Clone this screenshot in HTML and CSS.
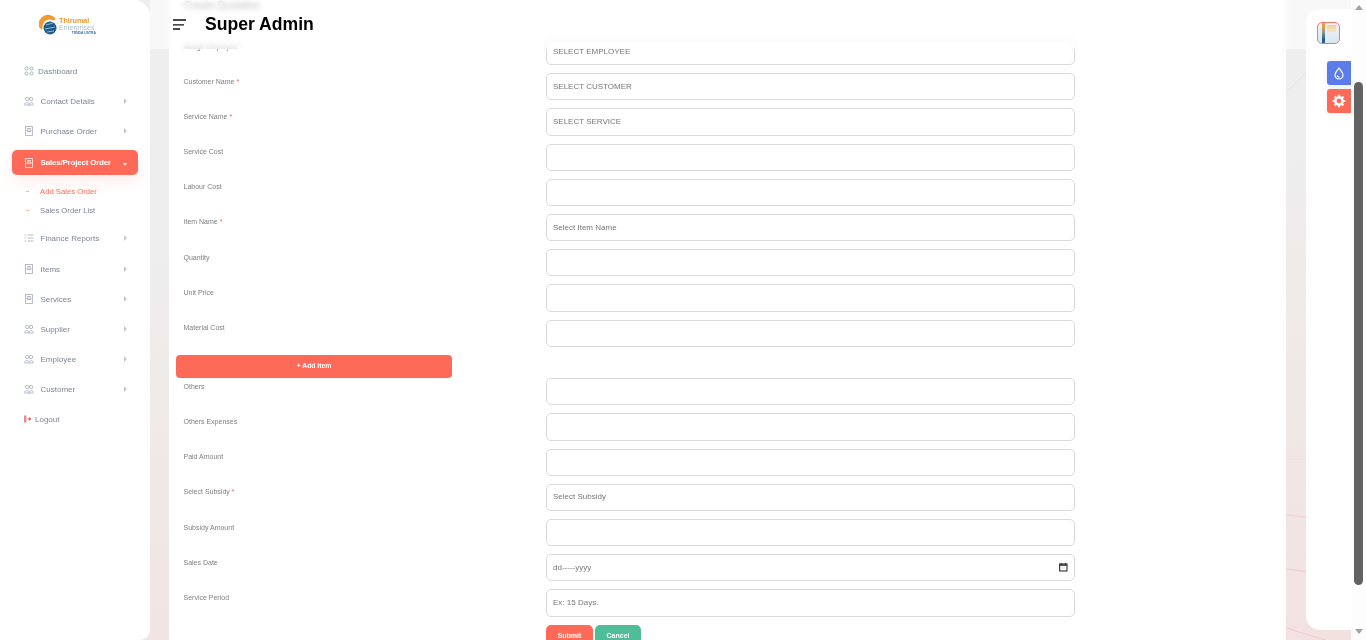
FILE: index.html
```html
<!DOCTYPE html>
<html lang="en">
<head>
    <meta charset="UTF-8">
    <meta name="viewport" content="width=device-width, initial-scale=1.0">
    <title>Create Quotation</title>
    <link rel="stylesheet" href="styles.css">
</head>
<body>
<div class="page">
    <svg class="bg-lines" width="1366" height="640" viewBox="0 0 1366 640">
        <path d="M1286 92 L1306 73" stroke="#dcebe8" fill="none"/>
        <path d="M1286 459 L1306 459" stroke="#f5dcdc" fill="none"/>
        <path d="M1286 515 L1306 517" stroke="#f5cfcf" fill="none"/>
        <path d="M1286 569 L1306 571.5" stroke="#f5c9c9" fill="none"/>
        <path d="M1286 628 L1325 640" stroke="#f5c9c9" fill="none"/>
    </svg>

    <aside class="sidebar">
        <div class="logo">
            <svg width="20" height="23" viewBox="0 0 20 23">
                <path d="M0 13 A9.5 9.5 0 0 1 17 5 L14 6.5 A7 7 0 0 0 4 10 L3 16 Z" fill="#f39a2b"/>
                <circle cx="11" cy="14" r="6.5" fill="#1f5c8c"/>
                <path d="M7 11 L14 9 M6 15 L16 13 M8 18 L15 17" stroke="#8fb8d4" stroke-width="1"/>
            </svg>
            <div class="logo-text">
                <span class="logo-name">Thirumal</span>
                <span class="logo-sub">Enterprises</span>
                <span class="logo-tag">TENDA USTRA</span>
            </div>
        </div>
        <nav class="menu">
            <a class="menu-item first short">
                <svg class="ico" viewBox="0 0 10 10"><rect x="1" y="1" width="3" height="3" rx="1"/><rect x="6" y="1" width="3" height="3" rx="1"/><rect x="1" y="6" width="3" height="3" rx="1"/><rect x="6" y="6" width="3" height="3" rx="1"/></svg>
                Dashboard
            </a>
            <a class="menu-item">
                <svg class="ico" viewBox="0 0 10 10"><circle cx="3.2" cy="3" r="1.7"/><circle cx="7" cy="3" r="1.7"/><path d="M.5 8.5 C1 6 5 6 5.2 8.5 M5 8.5 C5.5 6 9 6 9.5 8.5 M.5 9 H9.5"/></svg>
                Contact Details<i class="caret"></i>
            </a>
            <a class="menu-item">
                <svg class="ico" viewBox="0 0 10 10"><rect x="1.5" y=".5" width="7" height="9"/><path d="M3 2.5 H7 M3 4 H7 V5.5 H3 Z"/></svg>
                Purchase Order<i class="caret"></i>
            </a>
            <a class="menu-item active">
                <svg class="ico" viewBox="0 0 10 10"><rect x="1.5" y=".5" width="7" height="9"/><path d="M3 2.5 H7 M3 4 H7 V5.5 H3 Z"/></svg>
                Sales/Project Order<i class="caret down"></i>
            </a>
            <div class="submenu">
                <a class="sub-item current">Add Sales Order</a>
                <a class="sub-item">Sales Order List</a>
            </div>
            <a class="menu-item">
                <svg class="ico" viewBox="0 0 10 10"><path d="M.5 2 H2 M3.5 2 H9.5 M.5 5 H2 M3.5 5 H9.5 M.5 8 H2 M3.5 8 H9.5"/></svg>
                Finance Reports<i class="caret"></i>
            </a>
            <a class="menu-item">
                <svg class="ico" viewBox="0 0 10 10"><rect x="1.5" y=".5" width="7" height="9"/><path d="M3 2.5 H7 M3 4 H7 V5.5 H3 Z"/></svg>
                Items<i class="caret"></i>
            </a>
            <a class="menu-item">
                <svg class="ico" viewBox="0 0 10 10"><rect x="1.5" y=".5" width="7" height="9"/><path d="M3 2.5 H7 M3 4 H7 V5.5 H3 Z"/></svg>
                Services<i class="caret"></i>
            </a>
            <a class="menu-item">
                <svg class="ico" viewBox="0 0 10 10"><circle cx="3.2" cy="3" r="1.7"/><circle cx="7" cy="3" r="1.7"/><path d="M.5 8.5 C1 6 5 6 5.2 8.5 M5 8.5 C5.5 6 9 6 9.5 8.5 M.5 9 H9.5"/></svg>
                Supplier<i class="caret"></i>
            </a>
            <a class="menu-item">
                <svg class="ico" viewBox="0 0 10 10"><circle cx="3.2" cy="3" r="1.7"/><circle cx="7" cy="3" r="1.7"/><path d="M.5 8.5 C1 6 5 6 5.2 8.5 M5 8.5 C5.5 6 9 6 9.5 8.5 M.5 9 H9.5"/></svg>
                Employee<i class="caret"></i>
            </a>
            <a class="menu-item">
                <svg class="ico" viewBox="0 0 10 10"><circle cx="3.2" cy="3" r="1.7"/><circle cx="7" cy="3" r="1.7"/><path d="M.5 8.5 C1 6 5 6 5.2 8.5 M5 8.5 C5.5 6 9 6 9.5 8.5 M.5 9 H9.5"/></svg>
                Customer<i class="caret"></i>
            </a>
            <a class="menu-item short">
                <svg class="ico logout" width="8" height="8" viewBox="0 0 8 8"><rect x="0" y="0.5" width="2.4" height="7" fill="#e58a8a"/><path d="M3.4 4 H6 M5 2.6 L7 4 L5 5.4 Z" stroke="#f0675c" fill="#f0675c" stroke-width=".8"/></svg>
                Logout
            </a>
        </nav>
    </aside>

    <main class="content">
        <h4 class="card-title">Create Quotation</h4>
        <form class="quote-form">
            <label class="lbl">Assign Employee <b>*</b></label><input class="inp" placeholder="SELECT EMPLOYEE">
            <label class="lbl">Customer Name <b>*</b></label><input class="inp" placeholder="SELECT CUSTOMER">
            <label class="lbl">Service Name <b>*</b></label><input class="inp" placeholder="SELECT SERVICE">
            <label class="lbl">Service Cost</label><input class="inp">
            <label class="lbl">Labour Cost</label><input class="inp">
            <label class="lbl">Item Name <b>*</b></label><input class="inp" placeholder="Select Item Name">
            <label class="lbl">Quantity</label><input class="inp">
            <label class="lbl">Unit Price</label><input class="inp">
            <label class="lbl">Material Cost</label><input class="inp">
            <button type="button" class="btn add-item">+ Add Item</button>
            <label class="lbl">Others</label><input class="inp">
            <label class="lbl">Others Expenses</label><input class="inp">
            <label class="lbl">Paid Amount</label><input class="inp">
            <label class="lbl">Select Subsidy <b>*</b></label><input class="inp" placeholder="Select Subsidy">
            <label class="lbl">Subsidy Amount</label><input class="inp">
            <label class="lbl">Sales Date</label>
            <div class="inp date-inp">
                <span>dd-----yyyy</span>
                <svg width="10" height="10" viewBox="0 0 10 10"><rect x="1.6" y="2" width="7.4" height="7" fill="#f4f4f4" stroke="#333" stroke-width="1.1"/><path d="M1.6 3 H9" stroke="#333" stroke-width="1.6"/><path d="M3.2 .8 V2 M7.4 .8 V2" stroke="#333"/></svg>
            </div>
            <label class="lbl">Service Period</label><input class="inp" placeholder="Ex: 15 Days.">
            <div class="actions">
                <button type="button" class="btn submit">Submit</button>
                <button type="button" class="btn cancel">Cancel</button>
            </div>
        </form>
    </main>

    <div class="topbar">
        <svg width="14" height="12" viewBox="0 0 14 12"><path d="M0 1 H13 M0 5.8 H11 M0 10 H7" stroke="#111" stroke-width="1.3"/></svg>
        <h1 class="page-name">Super Admin</h1>
    </div>

    <aside class="rightbar">
        <div class="avatar"></div>
        <a class="side-btn blue">
            <svg width="12" height="13" viewBox="0 0 12 13"><path d="M6 1 C8 4 10 5.5 10 8 A4 4 0 0 1 2 8 C2 5.5 4 4 6 1 Z M4.2 8.5 C4.5 9.6 5.3 10.2 6.5 10.2" fill="none" stroke="#fff" stroke-width="1.2"/></svg>
        </a>
        <a class="side-btn red">
            <svg width="14" height="14" viewBox="0 0 14 14"><circle cx="7" cy="7" r="3.6" fill="none" stroke="#fff" stroke-width="2.4"/><path d="M7 .8 V3 M7 11 V13.2 M.8 7 H3 M11 7 H13.2 M2.6 2.6 L4.2 4.2 M9.8 9.8 L11.4 11.4 M11.4 2.6 L9.8 4.2 M4.2 9.8 L2.6 11.4" stroke="#fff" stroke-width="2.2"/></svg>
        </a>
    </aside>

    <div class="scrollbar">
        <i class="arrow up"></i>
        <div class="thumb"></div>
        <i class="arrow dn"></i>
    </div>
</div>
</body>
</html>
```

FILE: styles.css
```css
* {
    box-sizing: border-box;
}

body {
    margin: 0;
    font-family: "Liberation Sans", Arial, sans-serif;
}

.page {
    position: relative;
    display: flex;
    width: 1366px;
    height: 640px;
    overflow: hidden;
    background: linear-gradient(175deg, #eeeeee 35%, #f3e1e1 100%);
}

.bg-lines {
    position: absolute;
    left: 0;
    top: 0;
}

/* left menu */
.sidebar {
    position: relative;
    z-index: 3;
    flex: 0 0 150px;
    background: #fff;
    border-radius: 0 16px 10px 0;
}

.logo {
    display: flex;
    align-items: flex-start;
    height: 50px;
    padding: 14px 0 0 39px;
    filter: blur(.4px);
}

.logo-text {
    display: flex;
    flex-direction: column;
    width: 37px;
    padding-top: 3px;
    line-height: 7px;
}

.logo-name {
    color: #f0972f;
    font-size: 7.2px;
    font-weight: bold;
}

.logo-sub {
    color: #a9bfd2;
    font-size: 7px;
}

.logo-tag {
    color: #3b6fa8;
    font-size: 3.4px;
    font-weight: bold;
    text-align: right;
    white-space: nowrap;
    line-height: 5px;
}

.menu {
    display: flex;
    flex-direction: column;
    filter: blur(.3px);
}

.menu-item {
    display: flex;
    align-items: center;
    height: 30px;
    padding: 0 23px 0 24px;
    color: #7d8597;
    font-size: 8px;
}

.menu-item.first {
    margin-top: 6px;
}

.menu-item .ico {
    flex: none;
    width: 10px;
    height: 10px;
    margin-right: 6.5px;
    fill: none;
    stroke: #99a0b0;
    stroke-width: .7;
}

.menu-item.short .ico {
    margin-right: 4px;
}

.menu-item .ico.logout {
    width: 8px;
    height: 8px;
    margin-right: 3px;
    stroke: none;
}

.caret {
    margin-left: auto;
    border-left: 3px solid #c5c9d0;
    border-top: 3px solid transparent;
    border-bottom: 3px solid transparent;
}

.menu-item.active {
    height: 25px;
    margin: 4px 12px 0;
    padding: 0 11px 0 12px;
    background: #ff6a58;
    border-radius: 5px;
    color: #fff;
    font-weight: bold;
    letter-spacing: -.2px;
    box-shadow: 0 6px 16px rgba(255, 106, 88, .12);
}

.menu-item.active .ico {
    stroke: #fff;
}

.caret.down {
    border-top: 3px solid #fff;
    border-bottom: 0;
    border-left: 2.5px solid transparent;
    border-right: 2.5px solid transparent;
    margin-top: 3px;
}

.submenu {
    display: flex;
    flex-direction: column;
    padding: 6.5px 0 3.5px;
}

.submenu + .menu-item {
    margin-bottom: 1px;
}

.sub-item {
    position: relative;
    height: 19px;
    line-height: 19px;
    padding-left: 40px;
    color: #7d8597;
    font-size: 7.7px;
}

.sub-item::before {
    content: "";
    position: absolute;
    left: 26px;
    top: 9px;
    width: 3px;
    height: 1px;
    background: #f7b5ad;
}

.sub-item.current {
    color: #ff6a58;
}

/* main card */
.content {
    flex: 0 0 1117px;
    margin-left: 19px;
    background: #fff;
    padding: 0 7px;
}

.card-title {
    margin: 0;
    height: 38px;
    padding: 1px 8px 0;
    color: #666;
    font-size: 10px;
    font-weight: normal;
    line-height: 10px;
}

.quote-form {
    display: grid;
    grid-template-columns: 370px 529px;
    grid-auto-rows: min-content;
    row-gap: 8px;
    filter: blur(.3px);
}

.lbl {
    padding: 3.5px 0 0 7.5px;
    color: #808080;
    font-size: 7px;
    line-height: 9px;
}

.lbl b {
    color: #ff5b5b;
    font-weight: normal;
}

.inp {
    width: 529px;
    height: 27.2px;
    padding: 0 6px 1px;
    background: #fff;
    border: 1px solid #d9d9d9;
    border-radius: 5px;
    color: #777;
    font-family: inherit;
    font-size: 8px;
}

.inp::placeholder {
    color: #777;
    opacity: 1;
}

.date-inp {
    display: flex;
    align-items: center;
    justify-content: space-between;
    padding-right: 6px;
}

.btn {
    border: 0;
    border-radius: 5px;
    color: #fff;
    font-family: inherit;
    font-size: 7px;
    font-weight: bold;
}

.add-item {
    grid-column: 1 / 3;
    width: 276px;
    height: 23px;
    margin-bottom: -7.4px;
    padding: 0 0 2px;
    background: #ff6a58;
    border-radius: 4px;
    font-size: 6.8px;
}

.actions {
    grid-column: 2;
    display: flex;
    gap: 2px;
}

.submit {
    width: 47px;
    height: 22px;
    background: #ff6a58;
}

.cancel {
    width: 46px;
    height: 22px;
    background: #4fbd98;
}

/* header sits over the scrolled form */
.topbar {
    position: absolute;
    left: 150px;
    top: 0;
    right: 15px;
    z-index: 2;
    display: flex;
    align-items: center;
    gap: 18px;
    height: 49px;
    padding-left: 23px;
    background: rgba(255, 255, 255, .6);
    backdrop-filter: blur(2.5px);
}

.page-name {
    margin: 0;
    color: #000;
    font-size: 17.6px;
    font-weight: bold;
}

/* right strip */
.rightbar {
    position: relative;
    z-index: 3;
    display: flex;
    flex-direction: column;
    align-items: flex-end;
    flex: 0 0 45px;
    height: 621px;
    margin: 9px 0 0 20px;
    background: #fff;
    border-radius: 14px 0 0 14px;
}

.avatar {
    align-self: flex-start;
    width: 23px;
    height: 22px;
    margin: 13px 0 17px 11px;
    border: 1px solid #f2786a;
    border-radius: 5px;
    background:
        linear-gradient(#f7cf98, #f8e4c6) 9px 2px / 9px 7px no-repeat,
        linear-gradient(#f0a030 15%, #8a9a90 45%, #2c5f85 80%) 4px 0 / 3px 100% no-repeat,
        linear-gradient(#eef1f4, #dbe6f1);
}

.side-btn {
    display: flex;
    align-items: center;
    justify-content: center;
    width: 24px;
    height: 24px;
    margin-bottom: 4px;
    border-radius: 3px 0 0 3px;
    box-shadow: 0 0 6px rgba(0, 0, 0, .08);
}

.side-btn.blue {
    background: #5c7cec;
}

.side-btn.red {
    background: #ff6a58;
}

/* page scrollbar */
.scrollbar {
    position: relative;
    z-index: 3;
    flex: 0 0 15px;
    display: flex;
    flex-direction: column;
    align-items: center;
    background: #fdfdfd;
}

.arrow {
    border-left: 4px solid transparent;
    border-right: 4px solid transparent;
}

.arrow.up {
    margin-top: 5px;
    border-bottom: 5px solid #a3a3a3;
}

.arrow.dn {
    margin-top: 44px;
    border-top: 5px solid #a3a3a3;
}

.thumb {
    width: 9px;
    height: 503px;
    margin-top: 72px;
    background: #636363;
    border-radius: 5px;
}
```
